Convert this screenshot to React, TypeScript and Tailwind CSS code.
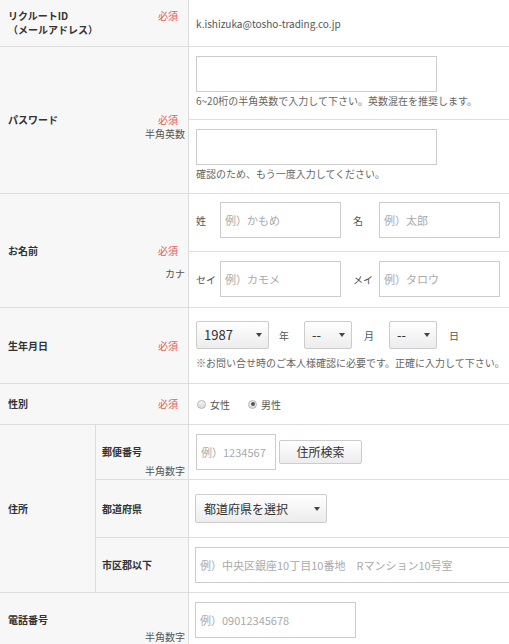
import React from "react";

const FONT = "font-['Noto_Sans_CJK_JP','Noto_Sans',sans-serif]";

function Req() {
  return <span className="mr-[7px] text-[10px] leading-[14px] text-[#e05b5b]">必須</span>;
}

function LabelCell({
  label,
  required,
  note,
  noteGap = "mt-0",
  className = "w-[189px] pl-2",
}: {
  label: React.ReactNode;
  required?: boolean;
  note?: string;
  noteGap?: string;
  className?: string;
}) {
  return (
    <div className={`grid shrink-0 grid-rows-[1fr_auto_1fr] border-r border-[#dddddd] bg-[#f7f7f7] pr-[3px] ${className}`}>
      <div />
      <div className="flex items-center justify-between">
        <span className="text-[10px] font-bold leading-[14px] text-[#333]">{label}</span>
        {required && <Req />}
      </div>
      <div className={`text-right text-[10px] leading-[14px] text-[#555] ${noteGap}`}>{note}</div>
    </div>
  );
}

function TextInput({ placeholder = "", className = "" }: { placeholder?: string; className?: string }) {
  return (
    <div className={`flex h-[36px] shrink-0 items-center border border-[#cccccc] bg-white pl-[4px] text-[11px] text-[#aaaaaa] ${className}`}>
      {placeholder}
    </div>
  );
}

function Select({ value, className = "", text = "text-[13px]" }: { value: string; className?: string; text?: string }) {
  return (
    <div
      className={`flex shrink-0 items-center justify-between rounded-[2px] border border-[#cccccc] bg-linear-to-b from-white to-[#ececec] pl-[7px] pr-[6px] text-[#333] ${text} ${className}`}
    >
      <span>{value}</span>
      <span className="h-0 w-0 border-x-[3px] border-t-[4px] border-x-transparent border-t-[#444]" />
    </div>
  );
}

function Radio({ checked }: { checked?: boolean }) {
  return (
    <span className="flex h-[9px] w-[9px] items-center justify-center rounded-full border border-[#b5b5b5] bg-linear-to-b from-[#f4f4f4] to-[#dcdcdc]">
      {checked && <span className="h-[4px] w-[4px] rounded-full bg-[#555]" />}
    </span>
  );
}

const hint = "text-[10px] leading-[14px] text-[#666]";

export default function App() {
  return (
    <div className={`h-[644px] w-[509px] overflow-hidden bg-white ${FONT}`}>
      {/* リクルートID */}
      <div className="flex h-[47px] border-b border-[#dddddd]">
        <div className="flex w-[189px] shrink-0 items-center border-r border-[#dddddd] bg-[#f7f7f7] pl-2 pr-[3px]">
          <div className="w-full text-[10px] font-bold leading-[14px] text-[#333]">
            <div className="flex justify-between">
              <span>リクルートID</span>
              <span className="mr-[7px] font-normal text-[#e05b5b]">必須</span>
            </div>
            <div>（メールアドレス）</div>
          </div>
        </div>
        <div className="flex flex-1 items-center pl-[7px] text-[10px] text-[#555]">k.ishizuka@tosho-trading.co.jp</div>
      </div>

      {/* パスワード */}
      <div className="flex h-[147px] border-b border-[#dddddd]">
        <LabelCell label="パスワード" required note="半角英数" />
        <div className="flex flex-1 flex-col">
          <div className="h-[73px] border-b border-[#dddddd] pl-[7px] pt-[9px]">
            <TextInput className="w-[241px]" />
            <p className={`mt-[2px] ${hint}`}>6~20桁の半角英数で入力して下さい。英数混在を推奨します。</p>
          </div>
          <div className="flex-1 pl-[7px] pt-[9px]">
            <TextInput className="w-[241px]" />
            <p className={`mt-[2px] ${hint}`}>確認のため、もう一度入力してください。</p>
          </div>
        </div>
      </div>

      {/* お名前 */}
      <div className="flex h-[114px] border-b border-[#dddddd]">
        <LabelCell label="お名前" required note="カナ" noteGap="mt-[9px]" />
        <div className="flex flex-1 flex-col text-[10px] text-[#555]">
          <div className="flex h-[58px] items-start border-b border-[#dddddd] pl-[7px] pt-[8px]">
            <span className="flex h-[36px] w-[24px] items-center">姓</span>
            <TextInput className="w-[121px]" placeholder="例）かもめ" />
            <span className="ml-[12px] flex h-[36px] w-[26px] items-center">名</span>
            <TextInput className="w-[121px]" placeholder="例）太郎" />
          </div>
          <div className="flex flex-1 items-start pl-[7px] pt-[9px]">
            <span className="flex h-[36px] w-[24px] items-center">セイ</span>
            <TextInput className="w-[121px]" placeholder="例）カモメ" />
            <span className="ml-[12px] flex h-[36px] w-[26px] items-center">メイ</span>
            <TextInput className="w-[121px]" placeholder="例）タロウ" />
          </div>
        </div>
      </div>

      {/* 生年月日 */}
      <div className="flex h-[76px] border-b border-[#dddddd]">
        <LabelCell label="生年月日" required />
        <div className="flex-1 pl-[7px] pt-[13px]">
          <div className="flex h-[28px] items-center text-[10px] text-[#555]">
            <Select value="1987" className="h-[28px] w-[73px]" />
            <span className="ml-[10px] mr-[15px]">年</span>
            <Select value="--" className="h-[28px] w-[48px]" />
            <span className="ml-[12px] mr-[15px]">月</span>
            <Select value="--" className="h-[28px] w-[48px]" />
            <span className="ml-[12px]">日</span>
          </div>
          <p className={`mt-[7px] ${hint}`}>※お問い合せ時のご本人様確認に必要です。正確に入力して下さい。</p>
        </div>
      </div>

      {/* 性別 */}
      <div className="flex h-[41px] border-b border-[#dddddd]">
        <LabelCell label="性別" required />
        <div className="flex flex-1 items-center pl-[8px] text-[10px] text-[#555]">
          <Radio />
          <span className="ml-[4px]">女性</span>
          <span className="ml-[18px]">
            <Radio checked />
          </span>
          <span className="ml-[4px]">男性</span>
        </div>
      </div>

      {/* 住所 */}
      <div className="flex h-[168px] border-b border-[#dddddd]">
        <div className="flex w-[96px] shrink-0 items-center border-r border-[#dddddd] bg-[#f7f7f7] pl-2">
          <span className="text-[10px] font-bold text-[#333]">住所</span>
        </div>
        <div className="flex flex-1 flex-col">
          <div className="flex h-[55px] border-b border-[#dddddd]">
            <LabelCell label="郵便番号" note="半角数字" noteGap="mt-[5px]" className="w-[93px] pl-[6px]" />
            <div className="flex flex-1 items-center pl-[7px]">
              <TextInput className="w-[80px]" placeholder="例）1234567" />
              <div className="ml-[3px] flex h-[24px] w-[83px] items-center justify-center rounded-[2px] border border-[#cccccc] bg-linear-to-b from-white to-[#ececec] text-[12px] text-[#333]">
                住所検索
              </div>
            </div>
          </div>
          <div className="flex h-[58px] border-b border-[#dddddd]">
            <LabelCell label="都道府県" className="w-[93px] pl-[6px]" />
            <div className="flex flex-1 items-center pl-[6px]">
              <Select value="都道府県を選択" text="text-[12px]" className="h-[29px] w-[132px] pl-[8px] pr-[5px]" />
            </div>
          </div>
          <div className="flex flex-1">
            <LabelCell label="市区郡以下" className="w-[93px] pl-[6px]" />
            <div className="flex flex-1 items-center overflow-hidden pl-[6px]">
              <TextInput className="w-[340px]" placeholder="例）中央区銀座10丁目10番地　Rマンション10号室" />
            </div>
          </div>
        </div>
      </div>

      {/* 電話番号 */}
      <div className="flex h-[55px] border-b border-[#dddddd]">
        <LabelCell label="電話番号" note="半角数字" noteGap="mt-[3px]" />
        <div className="flex-1 pl-[6px] pt-[9px]">
          <TextInput className="w-[161px]" placeholder="例）09012345678" />
        </div>
      </div>
    </div>
  );
}
